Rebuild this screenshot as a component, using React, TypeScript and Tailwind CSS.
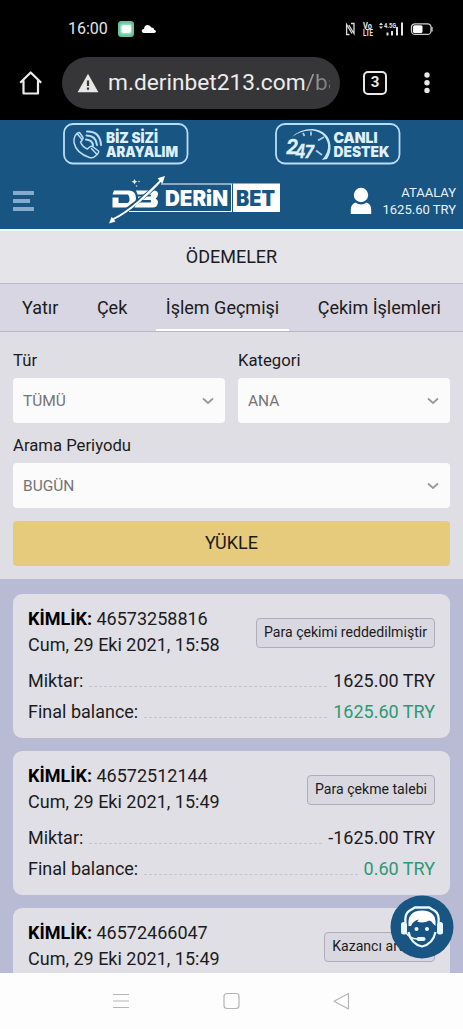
import React from "react";

const transactions = [
  {
    id: "46573258816",
    date: "Cum, 29 Eki 2021, 15:58",
    status: "Para çekimi reddedilmiştir",
    amount: "1625.00 TRY",
    balance: "1625.60 TRY",
  },
  {
    id: "46572512144",
    date: "Cum, 29 Eki 2021, 15:49",
    status: "Para çekme talebi",
    amount: "-1625.00 TRY",
    balance: "0.60 TRY",
  },
  {
    id: "46572466047",
    date: "Cum, 29 Eki 2021, 15:49",
    status: "Kazancı artırım",
  },
];

const StatusBar = () => {
  return (
    <div className="h-[46px] shrink-0 flex items-center pt-[12px] pl-[68px] pr-[29px] text-[#e4e4e4]">
      <span className="text-[16px] leading-none w-[50px]">16:00</span>
      <svg width="16" height="16" viewBox="0 0 16 16">
        <rect width="16" height="16" rx="3.5" fill="#6cc3a0" />
        <rect x="2" y="2.5" width="12" height="11" rx="3" fill="#94dcbf" />
        <path d="M3.500 6q0-2 2-2h6q1.500 0 1.500 1.500v4q0 2.500-2.500 2.500h-4q-3 0-3-2z" fill="#f6fffb" />
      </svg>
      <svg className="ml-[7px]" width="16" height="10" viewBox="0 0 16 10">
        <path d="M3 9Q.7 9 .7 7T3 5Q3.400 1 6.500 1 9.500 1 10.300 3.600 13 3.500 13.300 6 15 6.200 15 7.600T13.200 9z" fill="#fff" />
      </svg>
      <svg className="ml-auto" width="89" height="16" viewBox="0 0 89 16">
        <path d="M4.500 13.500H1.600V3.500L7 12.500M6 2.500h3v10L3.800 4" fill="none" stroke="#dcdcdc" strokeWidth="1.300" />
        <g fill="#e4e4e4" fontFamily="Roboto, sans-serif" fontWeight="700">
          <text x="18" y="7.500" fontSize="8.500" textLength="9" lengthAdjust="spacingAndGlyphs">Vo</text>
          <text x="18" y="14.800" fontSize="8.500" textLength="10" lengthAdjust="spacingAndGlyphs">LTE</text>
          <text x="39" y="7.300" fontSize="7.500" textLength="12" lengthAdjust="spacingAndGlyphs">4.5G</text>
        </g>
        <path d="M34 4l2-2.500L38 4zM34 5.500l2 2.500 2-2.500z" fill="#dcdcdc" />
        <path d="M42.500 14.500v-3M47 14.500v-4.500M52 14.500V6M57 14.500V1.500" stroke="#e4e4e4" strokeWidth="2" />
        <rect x="66.500" y="2.800" width="19.500" height="10.600" rx="3.500" fill="none" stroke="#cfcfcf" strokeWidth="1.300" />
        <rect x="68" y="4.300" width="9.500" height="7.600" rx="1.500" fill="#fff" />
        <path d="M87 6v4.500" stroke="#cfcfcf" strokeWidth="1.300" />
      </svg>
    </div>
  );
};

const AddressBar = () => {
  return (
    <div className="h-[74px] shrink-0 flex items-center pl-[18px] pr-[32px] pb-[1px]">
      <svg width="26" height="26" viewBox="0 0 26 26" fill="none" stroke="#ececec" strokeWidth="2.200" strokeLinejoin="round">
        <path d="M2.200 12.800L12.700 2.500l10.500 10.300M5.500 10.500v13h14.500v-13" />
      </svg>
      <div className="ml-[18px] w-[278px] h-[52px] rounded-full bg-[#363638] flex items-center pl-[15px]">
        <svg width="22" height="20" viewBox="0 0 22 20">
          <path d="M11 .8L21.400 19.200H.6z" fill="#e6e6e6" />
          <path d="M11 7.500v5.500M11 14.500v2.300" stroke="#363638" strokeWidth="2.200" />
        </svg>
        <div className="ml-[9px] w-[222px] overflow-hidden whitespace-nowrap text-[22.700px] leading-[32px] text-[#ececec] pt-[1px]">
          m.derinbet213.com
          <span className="bg-gradient-to-r from-[#aaaaaa] to-[#606060] bg-clip-text text-transparent">/ba</span>
        </div>
      </div>
      <div className="ml-[23px] w-[24px] h-[24px] rounded-[5px] border-2 border-[#e8e8e8] text-[#e8e8e8] text-[15px] font-bold leading-none flex items-center justify-center">
        3
      </div>
      <svg className="ml-auto" width="8" height="22" viewBox="0 0 8 22" fill="#e8e8e8">
        <circle cx="4" cy="3" r="2.700" />
        <circle cx="4" cy="10.700" r="2.700" />
        <circle cx="4" cy="18.400" r="2.700" />
      </svg>
    </div>
  );
};

const CallButton = () => {
  return (
    <svg width="126" height="42" viewBox="0 0 126 42">
      <rect x="1" y="1" width="123.500" height="39.500" rx="9" fill="none" stroke="#b9ddf5" strokeWidth="1.800" />
      <g fill="none" stroke="#b9ddf5" strokeWidth="1.500" strokeLinecap="round" strokeLinejoin="round">
        <path d="M12 13q2-3.500 4.500-3.500L20 14.500q.5 1.500-2.500 4.500 2 5 7 7 3-3.500 5-2.500l6 4.500q1 1.500-3 5-2.500 2.500-6 1.500Q13 30 11 19.500q-.5-3.500 1-6.500z" />
        <path d="M14 10.500l5 6M28.500 25.500l5.500 6" />
        <path d="M24 8.500Q37 8 38 22M23.500 12.500Q33 12.500 34 22M23 16.500q6.500.5 7 6" strokeWidth="2" />
      </g>
      <g fill="#dff0fc" fontFamily="Inter, sans-serif" fontWeight="900" fontSize="14">
        <text x="43" y="20" textLength="52" lengthAdjust="spacingAndGlyphs">BİZ SİZİ</text>
        <text x="43" y="33.500" textLength="72" lengthAdjust="spacingAndGlyphs">ARAYALIM</text>
      </g>
    </svg>
  );
};

const SupportButton = () => {
  return (
    <svg width="126" height="42" viewBox="0 0 126 42">
      <rect x="1" y="1" width="123.500" height="39.500" rx="9" fill="none" stroke="#b9ddf5" strokeWidth="1.800" />
      <path d="M17 14Q25 6 37 6q17 1.500 18.500 16.500Q56 30 52 36l-5 1Q54 29 53 21.500 50.500 9 37 7.500 26 7 17 14z" fill="#c9e5f8" />
      <path d="M36 8.500v4M28 10l1.500 3M43 17.500l6-3.500M41 27.500l6 4.500" stroke="#a4cfec" strokeWidth="1.800" />
      <g fill="#dff0fc" stroke="#dff0fc" strokeWidth="0.300" fontFamily="Inter, sans-serif" fontStyle="italic" fontWeight="700">
        <text x="11" y="31" fontSize="20" textLength="12" lengthAdjust="spacingAndGlyphs">2</text>
        <text x="20" y="35" fontSize="19" textLength="10.500" lengthAdjust="spacingAndGlyphs">4</text>
        <text x="29.500" y="34.500" fontSize="17" textLength="9.500" lengthAdjust="spacingAndGlyphs">7</text>
      </g>
      <g fill="#dff0fc" fontFamily="Inter, sans-serif" fontWeight="900" fontSize="14">
        <text x="58.500" y="20" textLength="44" lengthAdjust="spacingAndGlyphs">CANLI</text>
        <text x="58.500" y="33.500" textLength="56" lengthAdjust="spacingAndGlyphs">DESTEK</text>
      </g>
    </svg>
  );
};

const Logo = () => {
  return (
    <svg width="174" height="50" viewBox="0 0 174 50">
      {/* monogram */}
      <path fill="#fff" d="M6 15.500h15.500q6.500.5 6.500 8-.5 8.500-7.500 9H4.500V22.500h6v5.500h9q2-.3 2-3.700T20 19.500H4.500z" />
      <path fill="#fff" d="M28 15.500h18.500q3.800.5 3.500 4-.3 3-2.500 4 3 1.500 2.300 5-.8 4-5 4H26.500l3-5h13q1.500-1.300 0-2.500H30v-3.500h12.500q1.200-1.200 0-2H29.500z" />
      <path d="M3 44Q14 39 29 27 46 14 54 5" fill="none" stroke="#195583" strokeWidth="4" />
      <path d="M1 48.500l2.500-6.500 1.500 1.200Q16 38 30 26 43 14 51.500 5.500L49.500 3.200 57 1 54.500 8.500 52.800 7Q44 17 31.500 27.500 17 39.500 6 44.800L7.500 46.500z" fill="#fff" />
      <path d="M26.500 4l1 2 2 .7-2 .9-1 2-1-2-2-.9 2-.7z" fill="#e9f7fc" />
      <circle cx="31" cy="6.500" r="0.800" fill="#b9ddf5" />
      <circle cx="28.500" cy="11" r="0.800" fill="#b9ddf5" />
      {/* wordmark frame */}
      <path d="M53 9h70M21 36.500h102" stroke="#fff" strokeWidth="1.200" />
      <path d="M123 8.500h49v28.500h-49z" fill="#fff" />
      <path d="M124.500 8.500v28.500" stroke="#195583" strokeWidth="1" />
      <g fontFamily="Inter, sans-serif" fontWeight="900" fontSize="21">
        <text x="57" y="31" fill="#fff" textLength="63" lengthAdjust="spacingAndGlyphs">DERiN</text>
        <text x="128" y="31" fill="#195583" textLength="39" lengthAdjust="spacingAndGlyphs">BET</text>
      </g>
    </svg>
  );
};

const Header = () => {
  return (
    <div className="h-[111px] shrink-0 bg-[#195583] border-b-2 border-[#f4f9fb] flex flex-col">
      <div className="flex pt-[3px] pl-[63px] gap-[86px]">
        <CallButton />
        <SupportButton />
      </div>
      <div className="flex mt-[10px] pl-[13px] pr-[7px]">
        <div className="w-[21px] mt-[16px] flex flex-col gap-[4px]">
          <div className="h-[4px] w-[21px] bg-[#84abcb]"></div>
          <div className="h-[4px] w-[17px] bg-[#84abcb]"></div>
          <div className="h-[4px] w-[21px] bg-[#84abcb]"></div>
        </div>
        <div className="ml-[74px]">
          <Logo />
        </div>
        <svg className="ml-auto mt-[12px]" width="22" height="28" viewBox="0 0 22 28" fill="#fff">
          <circle cx="11" cy="8" r="7.200" />
          <path d="M.8 27v-4.500Q1 17 5.500 15.500 8 17.600 11 17.600t5.500-2.100Q21 17 21.200 22.500V27z" />
        </svg>
        <div className="w-[84px] mt-[9px] text-right text-[#e8f1f8] text-[13px] leading-[17px] whitespace-nowrap">
          <p>ATAALAY</p>
          <p>1625.60 TRY</p>
        </div>
      </div>
    </div>
  );
};

const Select = ({ label, value }: { label: string; value: string }) => {
  return (
    <div className="flex-1">
      <p className="text-[16.700px] leading-[20px] mb-[7px]">{label}</p>
      <div className="h-[45px] bg-[#fbfbfb] rounded-[4px] flex items-center justify-between pl-[10px] pr-[11px] text-[15.500px] text-[#747474]">
        <span className="pt-[2px]">{value}</span>
        <svg width="12" height="8" viewBox="0 0 12 8" fill="none" stroke="#999" strokeWidth="1.800">
          <path d="M1 1.500l5 4.500 5-4.500" />
        </svg>
      </div>
    </div>
  );
};

const Row = ({ label, value, green }: { label: string; value: string; green?: boolean }) => {
  return (
    <div className="flex h-[31px] items-center">
      <span>{label}</span>
      <div className="flex-1 mx-[6px] mt-[11px] border-b border-dashed border-[#c6c5ce]"></div>
      <span className={green ? "text-[#2b9a73]" : ""}>{value}</span>
    </div>
  );
};

type Transaction = { id: string; date: string; status: string; amount?: string; balance?: string };

const Card = ({ item }: { item: Transaction }) => {
  return (
    <div className="h-[144px] shrink-0 bg-[#e0dfe6] rounded-[9px] px-[15px] pt-[12px] text-[18px] whitespace-nowrap">
      <div className="flex justify-between items-center mb-[7px]">
        <div className="leading-[26px]">
          <p>
            <span className="font-bold text-black">KİMLİK:</span> {item.id}
          </p>
          <p>{item.date}</p>
        </div>
        <div className="h-[30px] mt-[2px] px-[7px] rounded-[4px] border border-[#aeadb9] bg-[#d9d8e1] text-[14.100px] leading-[27px]">
          {item.status}
        </div>
      </div>
      {item.amount && <Row label="Miktar:" value={item.amount} />}
      {item.balance && <Row label="Final balance:" value={item.balance} green />}
    </div>
  );
};

const App = () => {
  return (
    <div className="w-[463px] h-[1029px] overflow-hidden flex flex-col bg-black text-[#1c1b20] font-[Roboto,sans-serif]">
      <StatusBar />
      <AddressBar />
      <Header />
      <div className="h-[52px] shrink-0 bg-[#e5e4e9] flex items-center justify-center pb-[2px] text-[18px]">ÖDEMELER</div>
      <div className="h-[49px] shrink-0 bg-[#d7d6e2] border-y border-[#b9b8cb] flex justify-between px-[12px] text-[18px] leading-[47px] whitespace-nowrap">
        <span className="px-[10px]">Yatır</span>
        <span className="px-[10px]">Çek</span>
        <span className="px-[10px] border-b-2 border-white">İşlem Geçmişi</span>
        <span className="px-[10px]">Çekim İşlemleri</span>
      </div>
      <div className="h-[247px] shrink-0 bg-[#dfdee5] px-[13px] pt-[19px]">
        <div className="flex gap-[13px] mb-[13px]">
          <Select label="Tür" value="TÜMÜ" />
          <Select label="Kategori" value="ANA" />
        </div>
        <Select label="Arama Periyodu" value="BUGÜN" />
        <button className="mt-[13px] w-full h-[45px] rounded-[4px] bg-[#e5cb7b] text-[18px] pb-[2px]">YÜKLE</button>
      </div>
      <div className="relative h-[394px] shrink-0 bg-[#b9bad4]">
        <div className="h-full overflow-hidden flex flex-col gap-[13px] px-[13px] pt-[15px]">
          {transactions.map((item) => (
            <Card key={item.id} item={item} />
          ))}
        </div>
        <svg className="absolute left-[390px] top-[316px]" width="64" height="64" viewBox="0 0 64 64">
          <circle cx="32" cy="32" r="31.500" fill="#195583" />
          <path d="M15.500 28Q14.500 19 19 16l6-3.500h14l6 3.500q4.500 3 3.500 12" fill="none" stroke="#e9f7fc" strokeWidth="2.300" />
          <rect x="11" y="27" width="6" height="12.500" rx="2.500" fill="#e9f7fc" />
          <rect x="47" y="27" width="6" height="12.500" rx="2.500" fill="#e9f7fc" />
          <path d="M18.500 31Q17 15.500 32 15.500T45.500 31L43 28.500Q42 26.500 39.500 25.500 33 29 27 26.500l2-2q-6 1-8 6.500z" fill="#fff" />
          <path d="M18.500 37q2.500 12 13.500 14.500Q43 49 45.500 37" fill="none" stroke="#e9f7fc" strokeWidth="2.200" />
          <circle cx="26.500" cy="34" r="2" fill="#e9f7fc" />
          <circle cx="37" cy="34" r="2" fill="#e9f7fc" />
          <path d="M16 38q4 5.500 11 6" fill="none" stroke="#e9f7fc" strokeWidth="1.300" />
          <rect x="26.500" y="42" width="9" height="4" rx="2" fill="#e9f7fc" />
        </svg>
      </div>
      <div className="h-[56px] shrink-0 bg-[#fdfdfd]">
        <svg width="463" height="56" viewBox="0 0 463 56" fill="none" stroke="#b5b5b5" strokeWidth="1.200">
          <path d="M113 21.500h16M113 28h16M113 34.500h16" />
          <rect x="224" y="20.500" width="15" height="15" rx="3" />
          <path d="M348.500 20.500v15.500L334 28.200z" strokeLinejoin="round" />
        </svg>
      </div>
    </div>
  );
};

export default App;
